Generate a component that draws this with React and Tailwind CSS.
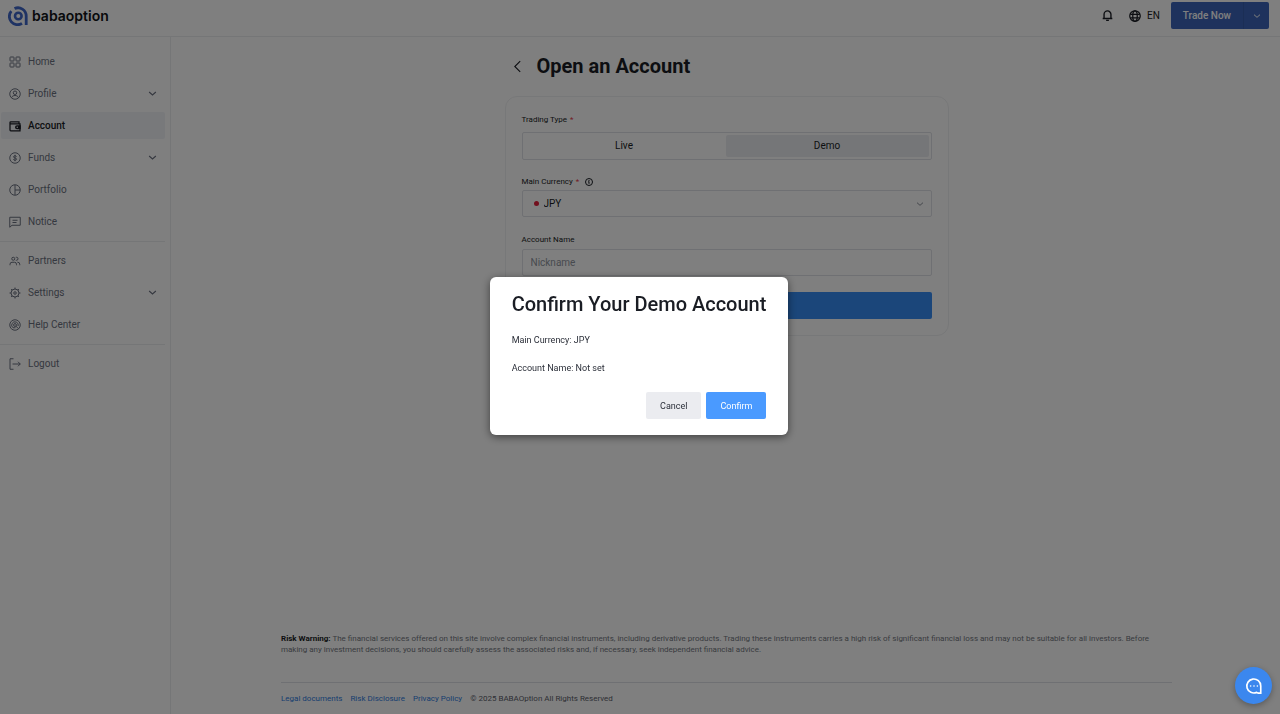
import React, { useState } from "react";

const icons = {
  home: (
    <>
      <rect x="2" y="2" width="8" height="8" rx="1" />
      <rect x="14" y="2" width="8" height="8" rx="1" />
      <rect x="2" y="14" width="8" height="8" rx="1" />
      <rect x="14" y="14" width="8" height="8" rx="1" />
    </>
  ),
  profile: (
    <>
      <circle cx="12" cy="12" r="10.500" />
      <circle cx="12" cy="9.500" r="3.500" />
      <path d="M5 19.500c1-3 3.700-4.500 7-4.500s6 1.500 7 4.500" />
    </>
  ),
  account: (
    <>
      <path strokeWidth="2.500" d="M20 7.500V3.500H3.500a1.500 1.500 0 0 0-1.500 1.500v15a1.500 1.500 0 0 0 1.500 1.500H22V7.500H3" />
      <path
        fill="currentColor"
        fillRule="evenodd"
        stroke="none"
        d="M23.500 10.500H16a4 4 0 0 0 0 8h7.500zM16.500 13a1.500 1.500 0 1 1 0 3 1.500 1.500 0 0 1 0-3z"
      />
    </>
  ),
  funds: (
    <>
      <circle cx="12" cy="12" r="10.500" />
      <path d="M15 9.300c-.3-1.200-1.500-1.800-3-1.800-1.800 0-3 .8-3 2.200 0 3.200 6.200 1.400 6.200 4.600 0 1.400-1.300 2.200-3.200 2.200-1.700 0-3-.7-3.200-2M12 5.500v13" />
    </>
  ),
  portfolio: (
    <>
      <circle cx="12" cy="12" r="10.500" />
      <path d="M12 2v20M12 12h10" />
    </>
  ),
  notice: (
    <>
      <path d="M1.500 22.500V2.500h21v16H6z" />
      <path d="M7 8.500h10M7 13h8" />
    </>
  ),
  partners: (
    <>
      <circle cx="8.500" cy="7.500" r="3" />
      <path d="M13.500 4.500h1.500a3 3 0 0 1 0 6h-1.500M2 20.500v-2a4 4 0 0 1 4-4h5a4 4 0 0 1 4 4v2M16.500 14.500h1a4 4 0 0 1 4 4v2" />
    </>
  ),
  settings: (
    <>
      <circle cx="12" cy="12" r="8" />
      <circle cx="12" cy="12" r="2.500" />
      <path d="M12 1v3M12 20v3M1 12h3M20 12h3M4.200 4.200l2.100 2.100M17.700 17.700l2.100 2.100M4.200 19.800l2.100-2.100M17.700 6.300l2.100-2.100" />
    </>
  ),
  help: (
    <>
      <circle cx="12" cy="12" r="10.500" />
      <path d="M8 17.500a6.600 6.600 0 1 1 10.300-3.500" />
      <circle cx="12" cy="12" r="2.800" />
      <path d="M13.500 14l5.500 5.500M8 17.500h5" />
    </>
  ),
  logout: <path d="M9 1.500H2v21h7M7 12h15.500M18 7.500l4.500 4.500-4.500 4.500" />,
  down: <path d="M3 8l9 8 9-8" />,
  back: <path d="M17 2L7 12l10 10" />,
  bell: <path d="M1.500 18.500h21M4.500 18.500V9.500a7.500 7.500 0 0 1 15 0v9M9 22.500h6" />,
  globe: (
    <>
      <circle cx="12" cy="12" r="10.500" />
      <ellipse cx="12" cy="12" rx="4.500" ry="10.500" />
      <path d="M2.500 8.500h19M2.500 15.500h19" />
    </>
  ),
  info: (
    <>
      <circle cx="12" cy="12" r="10.500" />
      <path d="M12 10.500v7M12 6v3M9.500 11.500H12" />
    </>
  ),
};

function Icon({ name, className = "size-3", stroke = 2 }) {
  return (
    <svg
      viewBox="0 0 24 24"
      fill="none"
      stroke="currentColor"
      strokeWidth={stroke}
      className={`shrink-0 ${className}`}
      aria-hidden="true"
    >
      {icons[name]}
    </svg>
  );
}

const menu = [
  [
    { label: "Home", icon: "home" },
    { label: "Profile", icon: "profile", expandable: true },
    { label: "Account", icon: "account", active: true },
    { label: "Funds", icon: "funds", expandable: true },
    { label: "Portfolio", icon: "portfolio" },
    { label: "Notice", icon: "notice" },
  ],
  [
    { label: "Partners", icon: "partners" },
    { label: "Settings", icon: "settings", expandable: true },
    { label: "Help Center", icon: "help" },
  ],
  [{ label: "Logout", icon: "logout" }],
];

function Logo() {
  return (
    <a href="#" className="flex items-center gap-1 text-[#111318]">
      <svg viewBox="0 0 20 20" className="size-5" aria-hidden="true">
        <g fill="none" stroke="#3f66c8">
          <path d="M3.300 5.200A8.200 8.200 0 0 0 14 17.400" strokeWidth="2.800" />
          <path d="M6.500 2.600A8.200 8.200 0 0 1 18.200 10V19" strokeWidth="2.800" />
          <circle cx="10.300" cy="10" r="3.300" strokeWidth="2.600" />
        </g>
      </svg>
      <span className="font-[Inter,sans-serif] text-[14px] leading-5 font-semibold">babaoption</span>
    </a>
  );
}

function Header() {
  return (
    <header className="flex h-[37px] items-start justify-between border-b border-[#ebecef] pr-[11px] pl-2">
      <div className="pt-[6px]">
        <Logo />
      </div>
      <div className="flex items-center pt-[2px]">
        <button type="button" aria-label="Notifications" className="mr-4">
          <Icon name="bell" className="size-[11px]" stroke={3} />
        </button>
        <button type="button" className="mr-[11px] flex items-center gap-[6px] text-[10px]">
          <Icon name="globe" className="size-[12px]" stroke={2.5} />
          EN
        </button>
        <div className="flex h-[27px] items-center rounded-xs bg-[#3c65ba] text-white">
          <button type="button" className="h-full px-3 text-[10px] font-medium">
            Trade Now
          </button>
          <button
            type="button"
            aria-label="More platforms"
            className="flex h-full w-[26px] items-center justify-center border-l border-[#375cab]"
          >
            <Icon name="down" className="size-2" stroke={3} />
          </button>
        </div>
      </div>
    </header>
  );
}

function Sidebar() {
  return (
    <nav className="w-[171px] shrink-0 border-r border-[#ebecef] pt-[11px] pr-[5px]">
      {menu.map((group, i) => (
        <ul
          key={i}
          className={`flex flex-col gap-[5px] pl-px ${i > 0 ? "mt-[6px] border-t border-[#ebecef] pt-[5px]" : ""}`}
        >
          {group.map((item) => (
            <li key={item.label}>
              <a
                href="#"
                className={`flex h-[27px] items-center gap-[7px] rounded-xs px-2 text-[10px] ${
                  item.active ? "bg-[#f0f3f7] font-medium text-[#1a1d24]" : "text-[#6b7180]"
                }`}
              >
                <Icon name={item.icon} />
                <span className="flex-1">{item.label}</span>
                {item.expandable && <Icon name="down" className="size-[9px]" stroke={3} />}
              </a>
            </li>
          ))}
        </ul>
      ))}
    </nav>
  );
}

function Required() {
  return <span className="ml-px text-[#e5384c]">*</span>;
}

function AccountForm({ tradingType, setTradingType, name, setName }) {
  return (
    <form
      className="rounded-xl border border-[#eff0f2] px-4 pt-[17px] pb-4 text-[8px] leading-3"
      onSubmit={(e) => e.preventDefault()}
    >
      <p id="trading-type">
        Trading Type <Required />
      </p>
      <div
        role="group"
        aria-labelledby="trading-type"
        className="mt-[6px] grid h-7 grid-cols-2 rounded-xs border border-[#dfe1e6] py-[2px] pr-[2px]"
      >
        {["Live", "Demo"].map((type) => (
          <button
            key={type}
            type="button"
            aria-pressed={tradingType === type}
            onClick={() => setTradingType(type)}
            className={`rounded-xs text-[10px] ${tradingType === type ? "bg-[#ebedf1]" : ""}`}
          >
            {type}
          </button>
        ))}
      </div>

      <div className="mt-4 flex items-center gap-[6px]">
        <label htmlFor="currency">
          Main Currency <Required />
        </label>
        <Icon name="info" className="size-2" stroke={3} />
      </div>
      <div className="mt-[2px] flex h-[27px] items-center rounded-xs border border-[#dfe1e6] px-[7px]">
        <span className="mx-1 size-[5px] rounded-full bg-[#e5203c]" />
        <select id="currency" className="flex-1 appearance-none pl-px text-[10px]">
          <option>JPY</option>
        </select>
        <Icon name="down" className="size-2 text-[#8a8f99]" stroke={3} />
      </div>

      <label htmlFor="nickname" className="mt-[17px] block">
        Account Name
      </label>
      <input
        id="nickname"
        value={name}
        onChange={(e) => setName(e.target.value)}
        placeholder="Nickname"
        className="mt-[3px] block h-[27px] w-full rounded-xs border border-[#dfe1e6] px-2 text-[10px] placeholder:text-[#8f949e]"
      />
      <button
        type="submit"
        aria-label="Open account"
        className="mt-4 block h-[27px] w-full rounded-xs bg-[#368df5]"
      />
    </form>
  );
}

function Footer() {
  return (
    <footer className="mx-auto mt-auto w-full max-w-[891px] pb-[10px] text-[8px] leading-[11px]">
      <p className="text-[#73777f]">
        <strong className="font-bold text-[#1a1d24]">Risk Warning:</strong> The financial services
        offered on this site involve complex financial instruments, including derivative products.
        Trading these instruments carries a high risk of significant financial loss and may not be
        suitable for all investors. Before making any investment decisions, you should carefully
        assess the associated risks and, if necessary, seek independent financial advice.
      </p>
      <div className="mt-[27px] flex gap-2 border-t border-[#dfe1e6] pt-[10px]">
        <a href="#" className="text-[#2f7de0]">Legal documents</a>
        <a href="#" className="text-[#2f7de0]">Risk Disclosure</a>
        <a href="#" className="text-[#2f7de0]">Privacy Policy</a>
        <span className="text-[#5c606a]">© 2025 BABAOption All Rights Reserved</span>
      </div>
    </footer>
  );
}

function ConfirmDialog({ tradingType, name, onClose }) {
  return (
    <div className="fixed inset-0 flex items-center justify-center bg-black/50 pr-[2px] pb-[2px]">
      <div
        role="dialog"
        aria-modal="true"
        aria-labelledby="confirm-title"
        className="rounded-md bg-white px-[22px] pt-[13px] pb-4 text-[9px] leading-4 text-[#2a2e38] shadow-[0_2px_8px_rgba(0,0,0,0.5)]"
      >
        <h2 id="confirm-title" className="text-[20px] leading-7 font-medium text-[#1a1d24]">
          Confirm Your {tradingType} Account
        </h2>
        <p className="mt-[14px]">Main Currency: JPY</p>
        <p className="mt-3">Account Name: {name || "Not set"}</p>
        <div className="mt-4 flex justify-end gap-[5px]">
          <button
            type="button"
            onClick={onClose}
            className="h-[27px] rounded-xs bg-[#ebecf0] px-[14px]"
          >
            Cancel
          </button>
          <button
            type="button"
            onClick={onClose}
            className="h-[27px] rounded-xs bg-[#4a9aff] px-[14px] text-white"
          >
            Confirm
          </button>
        </div>
      </div>
    </div>
  );
}

function ChatButton() {
  return (
    <button
      type="button"
      aria-label="Open chat"
      className="fixed right-2 bottom-[10px] flex size-[37px] items-center justify-center rounded-full bg-[#3b87ee] text-white shadow-[0_2px_6px_rgba(0,0,0,0.3)]"
    >
      <svg viewBox="0 0 24 24" className="size-[18px]" fill="none" stroke="currentColor" aria-hidden="true">
        <path strokeWidth="2.200" d="M15.500 20.500A9.300 9.300 0 1 1 21 12v9.500h-3.500l-2-1z" />
        <path strokeWidth="2.200" strokeLinecap="round" d="M7.500 12h.01M12 12h.01M16.500 12h.01" />
      </svg>
    </button>
  );
}

export default function App() {
  const [tradingType, setTradingType] = useState("Demo");
  const [name, setName] = useState("");
  const [confirming, setConfirming] = useState(true);

  return (
    <div className="flex min-h-screen flex-col bg-white font-[Roboto,sans-serif] text-[#1a1d24]">
      <Header />
      <div className="flex flex-1">
        <Sidebar />
        <main className="flex flex-1 flex-col pl-[2px]">
          <div className="mx-auto w-full max-w-[444px]">
            <div className="flex items-center gap-[13px] pt-[15px] pb-4 pl-[6px]">
              <button type="button" aria-label="Back">
                <Icon name="back" className="size-[13px]" />
              </button>
              <h1 className="text-[20px] leading-7 font-bold">Open an Account</h1>
            </div>
            <AccountForm
              tradingType={tradingType}
              setTradingType={setTradingType}
              name={name}
              setName={setName}
            />
          </div>
          <Footer />
        </main>
      </div>
      {confirming && (
        <ConfirmDialog tradingType={tradingType} name={name} onClose={() => setConfirming(false)} />
      )}
      <ChatButton />
    </div>
  );
}
